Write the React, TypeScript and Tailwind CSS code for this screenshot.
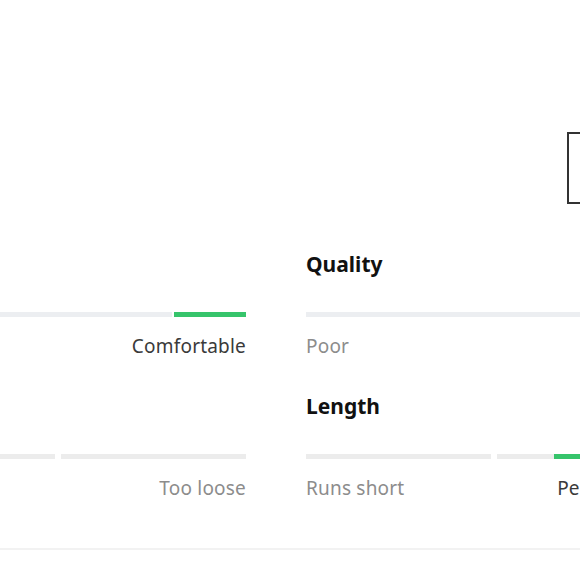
import React from 'react';

type Segmented = {
  title: string;
  kind: 'segments';
  labels: [string, string, string];
  selected: number; // index of selected segment
};

type Track = {
  title: string;
  kind: 'track';
  labels: [string, string];
  selected: 'start' | 'end';
};

type Rating = Segmented | Track;

// Widget is wider than the viewport; we see the right end of the left column
// and the left start of the right column.
const ratings: Rating[] = [
  { title: 'Comfort', kind: 'track', labels: ['Uncomfortable', 'Comfortable'], selected: 'end' },
  { title: 'Quality', kind: 'track', labels: ['Poor', 'Excellent'], selected: 'end' },
  { title: 'Width', kind: 'segments', labels: ['Too tight', 'Perfect', 'Too loose'], selected: 1 },
  { title: 'Length', kind: 'segments', labels: ['Runs short', 'Perfect', 'Runs long'], selected: 1 },
];

const RatingBlock: React.FC<{ rating: Rating }> = ({ rating }) => {
  return (
    <div>
      <h3 className="text-[21px] leading-6 font-bold text-[#111111]">{rating.title}</h3>

      {rating.kind === 'track' ? (
        <>
          <div className="mt-[36px] flex h-[5px] gap-[2px]">
            {rating.selected === 'start' && <div className="w-[72px] bg-[#36c46b]" />}
            <div className="flex-1 bg-[#eceef1]" />
            {rating.selected === 'end' && <div className="w-[72px] bg-[#36c46b]" />}
          </div>
          <div className="mt-[17px] flex justify-between text-[19px] leading-6 tracking-[0.2px]">
            <span className={rating.selected === 'start' ? 'text-[#3a3a3a]' : 'text-[#8c8c8c]'}>
              {rating.labels[0]}
            </span>
            <span className={rating.selected === 'end' ? 'text-[#3a3a3a]' : 'text-[#8c8c8c]'}>
              {rating.labels[1]}
            </span>
          </div>
        </>
      ) : (
        <>
          <div className="mt-[36px] grid h-[5px] grid-cols-3 gap-[6px]">
            {[0, 1, 2].map((i) => (
              <div key={i} className="flex justify-center bg-[#ececec]">
                {i === rating.selected && <div className="w-[72px] bg-[#36c46b]" />}
              </div>
            ))}
          </div>
          <div className="mt-[17px] grid grid-cols-3 gap-[6px] text-[19px] leading-6 tracking-[0.2px]">
            {rating.labels.map((label, i) => (
              <span
                key={label + i}
                className={`${i === 0 ? 'text-left' : i === 1 ? 'text-center' : 'text-right'} ${
                  i === rating.selected ? 'text-[#3a3a3a]' : 'text-[#8c8c8c]'
                }`}
              >
                {label}
              </span>
            ))}
          </div>
        </>
      )}
    </div>
  );
};

const App: React.FC = () => {
  return (
    <div className="h-[580px] w-full overflow-hidden bg-white font-['Noto_Sans',sans-serif]">
      <div className="ml-[-321px] w-[1194px]">
        {/* Header row with outlined button on the right */}
        <div className="grid h-[252px] grid-cols-2 gap-x-[60px] pt-[132px]">
          <div />
          <div className="flex justify-end">
            <div className="h-[72px] w-[306px] border-2 border-[#333333]" />
          </div>
        </div>

        {/* Ratings */}
        <div className="grid grid-cols-2 gap-x-[60px] gap-y-[36px]">
          {ratings.map((r) => (
            <RatingBlock key={r.title} rating={r} />
          ))}
        </div>

        {/* Divider */}
        <div className="mt-[48px] h-[2px] bg-[#f2f2f2]" />
      </div>
    </div>
  );
};

export default App;
